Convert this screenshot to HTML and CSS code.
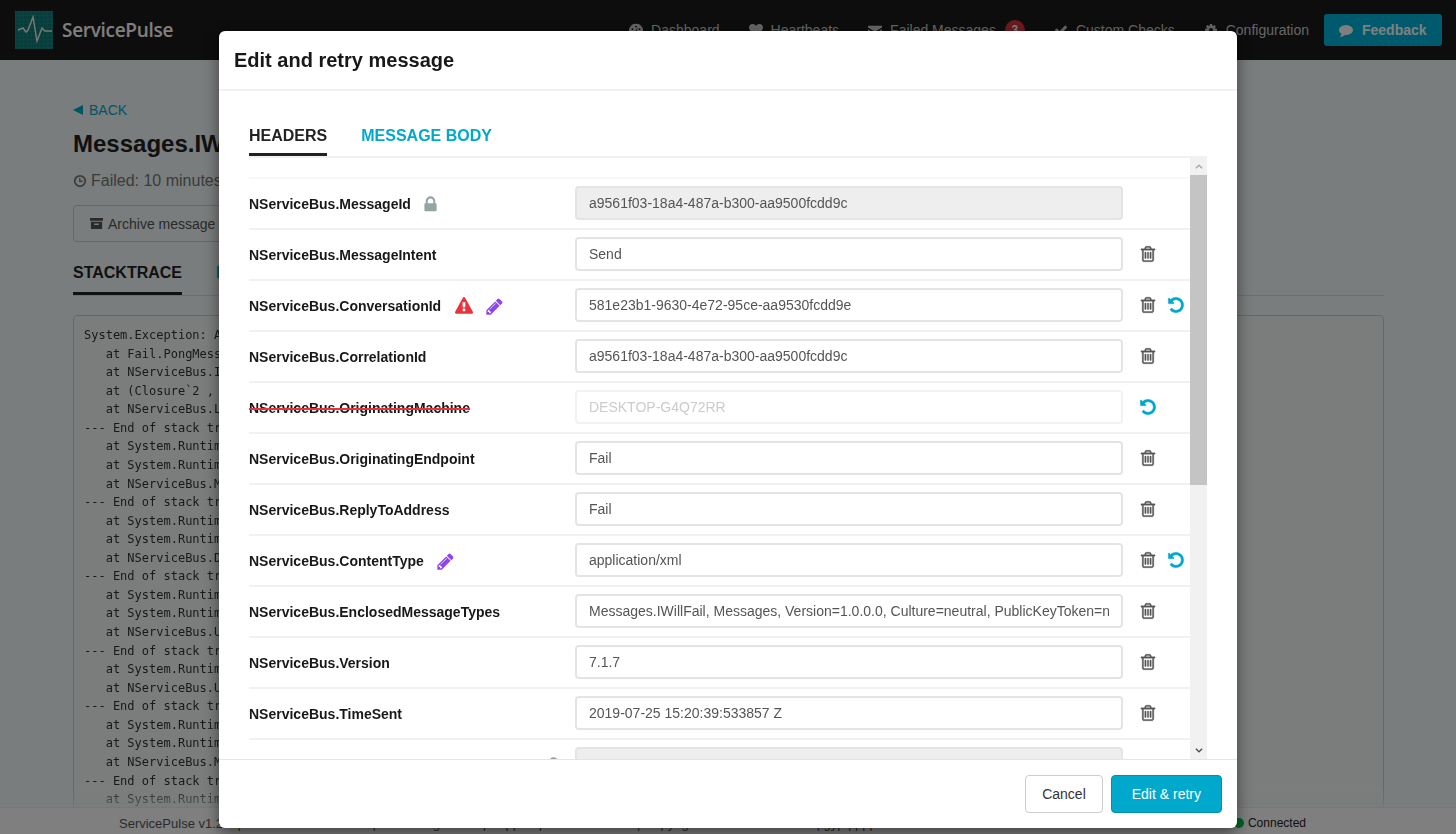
FILE: index.html
```html
<!DOCTYPE html>
<html lang="en">
<head>
  <meta charset="UTF-8" />
  <title>ServicePulse - Edit and retry message</title>
  <link rel="stylesheet" href="styles.css">
</head>
<body>

  <!-- ICONS -->
  <svg class="iconDefs" width="0" height="0">
    <symbol id="iTrash" viewBox="0 0 1792 1792"><path d="M704 736v576q0 14-9 23t-23 9h-64q-14 0-23-9t-9-23v-576q0-14 9-23t23-9h64q14 0 23 9t9 23zm256 0v576q0 14-9 23t-23 9h-64q-14 0-23-9t-9-23v-576q0-14 9-23t23-9h64q14 0 23 9t9 23zm256 0v576q0 14-9 23t-23 9h-64q-14 0-23-9t-9-23v-576q0-14 9-23t23-9h64q14 0 23 9t9 23zm128 724v-948h-896v948q0 22 7 40.5t14.5 27 10.5 8.5h832q3 0 10.5-8.5t14.5-27 7-40.5zm-672-1076h448l-48-117q-7-9-17-11h-317q-10 2-17 11zm928 32v64q0 14-9 23t-23 9h-96v948q0 83-47 143.5t-113 60.5h-832q-66 0-113-58.5t-47-141.5v-952h-96q-14 0-23-9t-9-23v-64q0-14 9-23t23-9h309l70-167q15-37 54-63t79-26h320q40 0 79 26t54 63l70 167h309q14 0 23 9t9 23z"/></symbol>
    <symbol id="iUndo" viewBox="0 0 1792 1792"><path d="M1664 896q0 156-61 298t-164 245-245 164-298 61q-172 0-327-72.5t-264-204.5q-7-10-6.5-22.5t8.5-20.5l137-138q10-9 25-9 16 2 23 12 73 95 179 147t225 52q104 0 198.5-40.5t163.5-109.5 109.5-163.5 40.5-198.5-40.5-198.5-109.5-163.5-163.5-109.5-198.5-40.5q-98 0-188 35.5t-160 101.5l137 138q31 30 14 69-17 40-59 40h-448q-26 0-45-19t-19-45v-448q0-42 40-59 39-17 69 14l130 129q107-101 244.5-156.5t284.5-55.5q156 0 298 61t245 164 164 245 61 298z"/></symbol>
    <symbol id="iLock" viewBox="0 0 1792 1792"><path d="M640 768h512v-192q0-106-75-181t-181-75-181 75-75 181v192zm832 96v576q0 40-28 68t-68 28h-960q-40 0-68-28t-28-68v-576q0-40 28-68t68-28h32v-192q0-184 132-316t316-132 316 132 132 316v192h32q40 0 68 28t28 68z"/></symbol>
    <symbol id="iPencil" viewBox="0 0 1792 1792"><path d="M491 1536l91-91-235-235-91 91v107h128v128h107zm523-928q0-22-22-22-10 0-17 7l-542 542q-7 7-7 17 0 22 22 22 10 0 17-7l542-542q7-7 7-17zm-54-192l416 416-832 832h-416v-416zm683 96q0 53-37 90l-166 166-416-416 166-165q36-38 90-38 53 0 91 38l235 234q37 39 37 91z"/></symbol>
    <symbol id="iWarning" viewBox="0 0 1792 1792"><path d="M1024 1375v-190q0-14-9.5-23.5t-22.5-9.5h-192q-13 0-22.5 9.5t-9.5 23.5v190q0 14 9.5 23.5t22.5 9.5h192q13 0 22.5-9.5t9.5-23.5zm-2-374l18-459q0-12-10-19-13-11-24-11h-220q-11 0-24 11-10 7-10 21l17 457q0 10 10 16.5t24 6.5h185q14 0 23.5-6.5t10.5-16.5zm-14-934l768 1408q35 63-2 126-17 29-46.5 46t-63.5 17h-1536q-34 0-63.5-17t-46.5-46q-37-63-2-126l768-1408q17-31 47-49t65-18 65 18 47 49z"/></symbol>
    <symbol id="iHeart" viewBox="0 0 1792 1792"><path d="M896 1664q-26 0-44-18l-624-602q-10-8-27.5-26t-55.5-65.5-68-97.5-53.5-121-23.5-138q0-220 127-344t351-124q62 0 126.5 21.5t120 58 95.5 68.5 76 68q36-36 76-68t95.5-68.5 120-58 126.5-21.5q224 0 351 124t127 344q0 221-229 450l-623 600q-18 18-44 18z"/></symbol>
    <symbol id="iComment" viewBox="0 0 1792 1792"><path d="M1792 896q0 174-120 321.5t-326 233-450 85.5q-70 0-145-8-198 175-460 242-49 14-114 22-17 2-30.5-9t-17.5-29v-1q-3-4-.5-12t2-10 4.5-9.5l6-9 7-8.5 8-9q7-8 31-34.5t34.5-38 31-39.5 32.5-51 27-59 26-76q-157-89-247.5-220t-90.5-281q0-130 71-248.5t191-204.5 286-136.5 348-50.5q244 0 450 85.5t326 233 120 321.5z"/></symbol>
    <symbol id="iCheck" viewBox="0 0 1792 1792"><path d="M1671 566q0 40-28 68l-724 724-136 136q-28 28-68 28t-68-28l-136-136-362-362q-28-28-28-68t28-68l136-136q28-28 68-28t68 28l294 295 656-657q28-28 68-28t68 28l136 136q28 28 28 68z"/></symbol>
    <symbol id="iCog" viewBox="0 0 1792 1792"><path d="M1152 896q0-106-75-181t-181-75-181 75-75 181 75 181 181 75 181-75 75-181zm512-109v222q0 12-8 23t-20 13l-185 28q-19 54-39 91 35 50 107 138 10 12 10 25t-9 23q-27 37-99 108t-94 71q-12 0-26-9l-138-108q-44 23-91 38-16 136-29 186-7 28-36 28h-222q-14 0-24.5-8.5t-11.5-21.5l-28-184q-49-16-90-37l-141 107q-10 9-25 9-14 0-25-11-126-114-165-168-7-10-7-23 0-12 8-23 15-21 51-66.5t54-70.5q-27-50-41-99l-183-27q-13-2-21-12.5t-8-23.5v-222q0-12 8-23t19-13l186-28q14-46 39-92-40-57-107-138-10-12-10-24 0-10 9-23 26-36 98.5-107.5t94.5-71.5q13 0 26 10l138 107q44-23 91-38 16-136 29-186 7-28 36-28h222q14 0 24.5 8.5t11.5 21.5l28 184q49 16 90 37l142-107q9-9 24-9 13 0 25 10 129 119 165 170 7 8 7 22 0 12-8 23-15 21-51 66.5t-54 70.5q26 50 41 98l183 28q13 2 21 12.5t8 23.5z"/></symbol>
    <symbol id="iGauge" viewBox="0 0 16 16"><path d="M8 1a8 8 0 0 0-7 12h14A8 8 0 0 0 8 1zm0 2a1 1 0 1 1 0 2 1 1 0 0 1 0-2zM4 6a1 1 0 1 1 0 2 1 1 0 0 1 0-2zm8 0a1 1 0 1 1 0 2 1 1 0 0 1 0-2zM3 10a1 1 0 1 1 0 2 1 1 0 0 1 0-2zm10 0a1 1 0 1 1 0 2 1 1 0 0 1 0-2zM8 12a1.5 1.5 0 0 1-.6-2.9L10 5l-1.200 4.300A1.500 1.500 0 0 1 8 12z" fill-rule="evenodd"/></symbol>
    <symbol id="iInbox" viewBox="0 0 16 16"><path d="M0 3h16v2L8 10 0 5zM0 7l8 5 8-5v7H0z"/></symbol>
    <symbol id="iClock" viewBox="0 0 16 16"><path d="M8 1a7 7 0 1 0 0 14A7 7 0 0 0 8 1zm0 2a5 5 0 1 1 0 10A5 5 0 0 1 8 3zM7 4.500v4.500h4V7.500H8.500v-3z" fill-rule="evenodd"/></symbol>
    <symbol id="iArchive" viewBox="0 0 14 14"><path d="M0 1h14v3H0zM1 5h12v8H1zm3.500 2v1.500h5V7z" fill-rule="evenodd"/></symbol>
  </svg>

  <!-- PAGE BEHIND THE DIALOG -->
  <header class="navbar">
    <div class="brand">
      <svg class="brandLogo" viewBox="0 0 38 38">
        <defs>
          <pattern id="logoGrid" width="4" height="4" patternUnits="userSpaceOnUse">
            <path d="M4 0H0V4" fill="none" stroke="#2a9a94" stroke-width="0.6"/>
          </pattern>
        </defs>
        <rect width="38" height="38" fill="#0f7a76"/>
        <rect width="38" height="38" fill="url(#logoGrid)"/>
        <path d="M3 19l5-2 3 4 2-2 5-13 4 24 5-13 3 3h7" fill="none" stroke="#eee" stroke-width="1.500"/>
      </svg>
      <span class="brandName">ServicePulse</span>
    </div>
    <nav class="navLinks">
      <a class="navLink"><svg class="navIcon"><use href="#iGauge"/></svg>Dashboard</a>
      <a class="navLink"><svg class="navIcon"><use href="#iHeart"/></svg>Heartbeats</a>
      <a class="navLink"><svg class="navIcon"><use href="#iInbox"/></svg>Failed Messages<span class="navBadge">3</span></a>
      <a class="navLink"><svg class="navIcon"><use href="#iCheck"/></svg>Custom Checks</a>
      <a class="navLink"><svg class="navIcon"><use href="#iCog"/></svg>Configuration</a>
    </nav>
    <button class="feedbackBtn"><svg class="navIcon"><use href="#iComment"/></svg>Feedback</button>
  </header>

  <main class="content">
    <a class="backLink"><span class="backArrow"></span>BACK</a>
    <h1 class="messageTitle">Messages.IWillFail</h1>
    <div class="failedAt"><svg class="clockIcon"><use href="#iClock"/></svg>Failed: 10 minutes ago</div>
    <div class="toolbar">
      <button class="toolBtn"><svg class="archiveIcon"><use href="#iArchive"/></svg>Archive message</button>
    </div>
    <div class="pageTabs">
      <span class="pageTab pageTabActive">STACKTRACE</span>
      <span class="pageTab">HEADERS</span>
      <span class="pageTab">MESSAGE BODY</span>
    </div>
    <pre class="stackTrace">System.Exception: A fake failure
   at Fail.PongMessageHandler.Handle(IWillFail message)
   at NServiceBus.InvokeHandlerTerminator.Terminate(IInvokeHandlerContext context)
   at (Closure`2 , Object , Object , IMessageHandlerContext )
   at NServiceBus.LoadHandlersConnector.Invoke(IIncomingLogicalMessageContext context)
--- End of stack trace from previous location ---
   at System.Runtime.ExceptionServices.ExceptionDispatchInfo.Throw()
   at System.Runtime.CompilerServices.TaskAwaiter.HandleNonSuccess(Task task)
   at NServiceBus.MutateIncomingMessageBehavior.Invoke(Context context)
--- End of stack trace from previous location ---
   at System.Runtime.ExceptionServices.ExceptionDispatchInfo.Throw()
   at System.Runtime.CompilerServices.TaskAwaiter.HandleNonSuccess(Task task)
   at NServiceBus.DeserializeMessageConnector.Invoke(Context context)
--- End of stack trace from previous location ---
   at System.Runtime.ExceptionServices.ExceptionDispatchInfo.Throw()
   at System.Runtime.CompilerServices.TaskAwaiter.HandleNonSuccess(Task task)
   at NServiceBus.UnitOfWorkBehavior.Invoke(Context context)
--- End of stack trace from previous location ---
   at System.Runtime.ExceptionServices.ExceptionDispatchInfo.Throw()
   at NServiceBus.UnitOfWorkBehavior.Invoke(Context context)
--- End of stack trace from previous location ---
   at System.Runtime.ExceptionServices.ExceptionDispatchInfo.Throw()
   at System.Runtime.CompilerServices.TaskAwaiter.HandleNonSuccess(Task task)
   at NServiceBus.MutateTransportMessageBehavior.Invoke(Context context)
--- End of stack trace from previous location ---
   at System.Runtime.ExceptionServices.ExceptionDispatchInfo.Throw()</pre>
  </main>

  <footer class="statusBar">
    <span class="statusVersion">ServicePulse v1.2.0 | ServiceControl v3.8.0 | Monitoring v3.8.0 | Support | Documentation | Copyright Particular Software | gyp | ppp</span>
    <span class="statusConnected"><span class="statusDot"></span>Connected</span>
  </footer>

  <!-- EDIT AND RETRY DIALOG -->
  <div class="overlay">
    <div class="modal">
      <div class="modalHeader">
        <h2 class="modalTitle">Edit and retry message</h2>
      </div>

      <div class="modalBody">
        <div class="tabs">
          <span class="tab tabActive">HEADERS</span>
          <span class="tab">MESSAGE BODY</span>
        </div>

        <div class="headerList">
          <div class="headerRows">
            <div class="headerRow headerRowFirst">
              <div class="headerName">NServiceBus.MessageId<svg class="icon iconLock"><use href="#iLock"/></svg></div>
              <input class="headerValue" value="a9561f03-18a4-487a-b300-aa9500fcdd9c" disabled>
            </div>
            <div class="headerRow">
              <div class="headerName">NServiceBus.MessageIntent</div>
              <input class="headerValue" value="Send">
              <div class="headerActions"><svg class="icon iconTrash"><use href="#iTrash"/></svg></div>
            </div>
            <div class="headerRow">
              <div class="headerName">NServiceBus.ConversationId<svg class="icon iconWarning"><use href="#iWarning"/></svg><svg class="icon iconPencil"><use href="#iPencil"/></svg></div>
              <input class="headerValue" value="581e23b1-9630-4e72-95ce-aa9530fcdd9e">
              <div class="headerActions"><svg class="icon iconTrash"><use href="#iTrash"/></svg><svg class="icon iconUndo"><use href="#iUndo"/></svg></div>
            </div>
            <div class="headerRow">
              <div class="headerName">NServiceBus.CorrelationId</div>
              <input class="headerValue" value="a9561f03-18a4-487a-b300-aa9500fcdd9c">
              <div class="headerActions"><svg class="icon iconTrash"><use href="#iTrash"/></svg></div>
            </div>
            <div class="headerRow">
              <div class="headerName"><span class="headerNameDeleted">NServiceBus.OriginatingMachine</span></div>
              <input class="headerValue headerValueDeleted" value="DESKTOP-G4Q72RR">
              <div class="headerActions"><svg class="icon iconUndo"><use href="#iUndo"/></svg></div>
            </div>
            <div class="headerRow">
              <div class="headerName">NServiceBus.OriginatingEndpoint</div>
              <input class="headerValue" value="Fail">
              <div class="headerActions"><svg class="icon iconTrash"><use href="#iTrash"/></svg></div>
            </div>
            <div class="headerRow">
              <div class="headerName">NServiceBus.ReplyToAddress</div>
              <input class="headerValue" value="Fail">
              <div class="headerActions"><svg class="icon iconTrash"><use href="#iTrash"/></svg></div>
            </div>
            <div class="headerRow">
              <div class="headerName">NServiceBus.ContentType<svg class="icon iconPencil"><use href="#iPencil"/></svg></div>
              <input class="headerValue" value="application/xml">
              <div class="headerActions"><svg class="icon iconTrash"><use href="#iTrash"/></svg><svg class="icon iconUndo"><use href="#iUndo"/></svg></div>
            </div>
            <div class="headerRow">
              <div class="headerName">NServiceBus.EnclosedMessageTypes</div>
              <input class="headerValue" value="Messages.IWillFail, Messages, Version=1.0.0.0, Culture=neutral, PublicKeyToken=null">
              <div class="headerActions"><svg class="icon iconTrash"><use href="#iTrash"/></svg></div>
            </div>
            <div class="headerRow">
              <div class="headerName">NServiceBus.Version</div>
              <input class="headerValue" value="7.1.7">
              <div class="headerActions"><svg class="icon iconTrash"><use href="#iTrash"/></svg></div>
            </div>
            <div class="headerRow">
              <div class="headerName">NServiceBus.TimeSent</div>
              <input class="headerValue" value="2019-07-25 15:20:39:533857 Z">
              <div class="headerActions"><svg class="icon iconTrash"><use href="#iTrash"/></svg></div>
            </div>
            <div class="headerRow">
              <div class="headerName">NServiceBus.ExceptionInfo.ExceptionType<svg class="icon iconLock"><use href="#iLock"/></svg></div>
              <input class="headerValue" value="" disabled>
            </div>
          </div>

          <!-- drawn scrollbar: the page is photographed with native ones hidden -->
          <div class="scrollBar">
            <svg class="scrollArrow scrollArrowUp" viewBox="0 0 9 6"><path d="M1 5l3.500-3.500L8 5"/></svg>
            <div class="scrollThumb"></div>
            <svg class="scrollArrow scrollArrowDown" viewBox="0 0 9 6"><path d="M1 1l3.500 3.500L8 1"/></svg>
          </div>
        </div>
      </div>

      <div class="modalFooter">
        <button class="btn">Cancel</button>
        <button class="btn btnPrimary">Edit &amp; retry</button>
      </div>
    </div>
  </div>

</body>
</html>
```

FILE: styles.css
```css
/* RESET */
* {
  margin: 0;
  padding: 0;
  box-sizing: border-box;
}

html, body {
  height: 100%;
  overflow: hidden;
}

body {
  display: flex;
  flex-direction: column;
  background-color: #f4fafa;
  font-family: "Liberation Sans", Arial, sans-serif;
  font-size: 14px;
  color: #222;
}

.iconDefs {
  position: absolute;
}

/* Top navigation */
.navbar {
  display: flex;
  align-items: center;
  flex: 0 0 60px;
  padding: 0 14px 0 15px;
  background-color: #1a1a1a;
}
.brand {
  display: flex;
  align-items: center;
  flex: 1;
}
.brandLogo {
  width: 38px;
  height: 38px;
  margin-right: 9px;
}
.brandName {
  font-family: "Open Sans", sans-serif;
  font-size: 19px;
  font-weight: 600;
  letter-spacing: -0.3px;
  color: #fff;
}
.navLinks {
  display: flex;
  align-items: center;
  gap: 29px;
  margin-right: 15px;
}
.navLink {
  display: flex;
  align-items: center;
  color: #ccc;
}
.navIcon {
  width: 14px;
  height: 14px;
  margin-right: 8px;
  fill: currentColor;
}
.navBadge {
  width: 20px;
  height: 20px;
  margin-left: 9px;
  border-radius: 50%;
  background-color: #d9363e;
  color: #fff;
  font-size: 12px;
  font-weight: bold;
  line-height: 20px;
  text-align: center;
}
.feedbackBtn {
  display: flex;
  align-items: center;
  width: 118px;
  height: 32px;
  padding-left: 15px;
  border: none;
  border-radius: 3px;
  background-color: #00b4dc;
  color: #fff;
  font: bold 14px "Liberation Sans", Arial, sans-serif;
}
.feedbackBtn .navIcon {
  margin-right: 9px;
}

/* Message details, dimmed behind the dialog */
.content {
  flex: 1;
  min-height: 0;
  padding: 42px 72px 0 73px;
  overflow: hidden;
}
.backLink {
  display: flex;
  align-items: center;
  height: 16px;
  color: #00a9cc;
}
.backArrow {
  width: 0;
  height: 0;
  margin-right: 6px;
  border-top: 5px solid transparent;
  border-bottom: 5px solid transparent;
  border-right: 10px solid #00a9cc;
}
.messageTitle {
  margin-top: 9px;
  font-size: 24px;
  line-height: 34px;
  color: #222;
}
.failedAt {
  display: flex;
  align-items: center;
  margin-top: 11px;
  font-size: 16px;
  color: #777;
}
.clockIcon {
  width: 14px;
  height: 14px;
  margin-right: 4px;
  fill: #777;
}
.toolbar {
  margin-top: 15px;
}
.toolBtn {
  display: flex;
  align-items: center;
  height: 37px;
  padding: 0 16px;
  border: 1px solid #ccc;
  border-radius: 4px;
  background-color: #f4fafa;
  color: #555;
  font: 14px "Liberation Sans", Arial, sans-serif;
}
.archiveIcon {
  width: 13px;
  height: 13px;
  margin-right: 5px;
  fill: #555;
}
.pageTabs {
  display: flex;
  gap: 34px;
  margin-top: 22px;
  border-bottom: 1px solid #ddd;
  font-size: 16px;
  font-weight: bold;
  color: #00a9cc;
}
.pageTab {
  height: 31px;
}
.pageTabActive {
  border-bottom: 3px solid #222;
  color: #222;
}
.stackTrace {
  height: 500px;
  margin-top: 19px;
  padding: 10px;
  overflow: hidden;
  border: 1px solid #ccc;
  border-radius: 4px;
  background-color: #f7fbfb;
  font-family: "DejaVu Sans Mono", monospace;
  font-size: 12px;
  line-height: 18.57px;
  color: #333;
  -webkit-mask-image: linear-gradient(#000 calc(100% - 29px), rgba(0, 0, 0, 0.35) calc(100% - 9px));
  mask-image: linear-gradient(#000 calc(100% - 29px), rgba(0, 0, 0, 0.35) calc(100% - 9px));
}

/* Footer status bar */
.statusBar {
  display: flex;
  flex: 0 0 27px;
  align-items: center;
  padding: 4px 150px 0 119px;
  border-top: 1px solid #eee;
  background-color: #fff;
  font-size: 13px;
  color: #555;
}
.statusVersion {
  flex: 1;
  white-space: nowrap;
  overflow: hidden;
}
.statusConnected {
  display: flex;
  align-items: center;
  font-size: 12px;
  color: #222;
}
.statusDot {
  width: 10px;
  height: 10px;
  margin-right: 4px;
  border-radius: 50%;
  background-color: #00c853;
}

/* Dialog */
.overlay {
  position: fixed;
  top: 0;
  left: 0;
  right: 0;
  bottom: 0;
  display: flex;
  justify-content: center;
  padding-top: 31px;
  background-color: rgba(0, 0, 0, 0.5);
}
.modal {
  display: flex;
  flex-direction: column;
  width: 1018px;
  height: 797px;
  border-radius: 6px;
  background-color: #fff;
  box-shadow: 0 5px 15px rgba(0, 0, 0, 0.5);
}
.modalHeader {
  flex: 0 0 60px;
  padding: 15px 15px 15px;
  border-bottom: 2px solid #f1f1f1;
}
.modalTitle {
  font-size: 20px;
  line-height: 28px;
  color: #181818;
}
.modalBody {
  display: flex;
  flex: 1;
  flex-direction: column;
  min-height: 0;
  padding: 28px 30px 0;
}
.tabs {
  display: flex;
  flex: 0 0 39px;
  gap: 34px;
  border-bottom: 2px solid #f1f1f1;
  font-size: 16px;
  font-weight: bold;
  line-height: 34px;
  color: #00a9cc;
}
.tab {
  height: 37px;
}
.tabActive {
  border-bottom: 3px solid #222;
  color: #222;
}

/* Header rows */
.headerList {
  display: flex;
  flex: 1;
  min-height: 0;
}
.headerRows {
  flex: 1;
  min-width: 0;
  padding-top: 19px;
  overflow: hidden;
}
.headerRow {
  display: flex;
  align-items: center;
  height: 51px;
  padding: 7px 0 8px;
  border-top: 2px solid #f1f1f1;
}
.headerRowFirst {
  border-top-color: #f8f8f8;
}
.headerName {
  display: flex;
  align-items: center;
  flex: 0 0 326px;
  padding-top: 2px;
  font-weight: bold;
  color: #181818;
}
.headerNameDeleted {
  text-decoration: line-through;
  text-decoration-color: #e8333f;
  text-decoration-thickness: 2px;
}
.headerValue {
  flex: 0 0 548px;
  height: 34px;
  padding: 0 12px;
  border: 2px solid #e4e4e4;
  border-radius: 4px;
  background-color: #fff;
  color: #555;
  font: 14px "Liberation Sans", Arial, sans-serif;
}
.headerValue:disabled {
  background-color: #eee;
  color: #555;
}
.headerValueDeleted {
  border-color: #f2f2f2;
  color: #ccc;
}
.headerActions {
  display: flex;
  align-items: center;
  gap: 10px;
  margin-left: 16px;
}

/* Scrollbar */
.scrollBar {
  display: flex;
  flex: 0 0 17px;
  flex-direction: column;
  align-items: center;
  background-color: #f1f1f1;
}
.scrollArrow {
  flex: 0 0 17px;
  width: 8px;
  fill: none;
  stroke-width: 1.5;
}
.scrollArrowUp {
  stroke: #a8a8a8;
}
.scrollArrowDown {
  margin-top: auto;
  stroke: #505050;
}
.scrollThumb {
  flex: 0 0 310px;
  width: 100%;
  background-color: #c4c4c4;
}

/* Icons */
.icon {
  flex: none;
  width: 18px;
  height: 18px;
}
.iconLock {
  width: 19px;
  height: 19px;
  margin-left: 10px;
  fill: #95a5a6;
}
.iconWarning {
  margin-left: 14px;
  fill: #e8333f;
}
.iconPencil {
  width: 19px;
  height: 19px;
  margin-left: 12px;
  fill: #8f44f0;
}
.iconTrash {
  fill: #555;
  stroke: #555;
  stroke-width: 40;
}
.iconUndo {
  fill: #00a9cc;
  stroke: #00a9cc;
  stroke-width: 30;
}

/* Dialog footer */
.modalFooter {
  display: flex;
  flex: 0 0 69px;
  justify-content: flex-end;
  gap: 8px;
  padding: 15px;
  border-top: 1px solid #e5e5e5;
}
.btn {
  height: 38px;
  padding: 0 16px;
  border: 1px solid #ccc;
  border-radius: 4px;
  background-color: #fff;
  color: #333;
  font: 14px "Liberation Sans", Arial, sans-serif;
}
.btnPrimary {
  padding: 0 20px;
  border-color: #0090ad;
  background-color: #00a9cc;
  color: #fff;
}
```
